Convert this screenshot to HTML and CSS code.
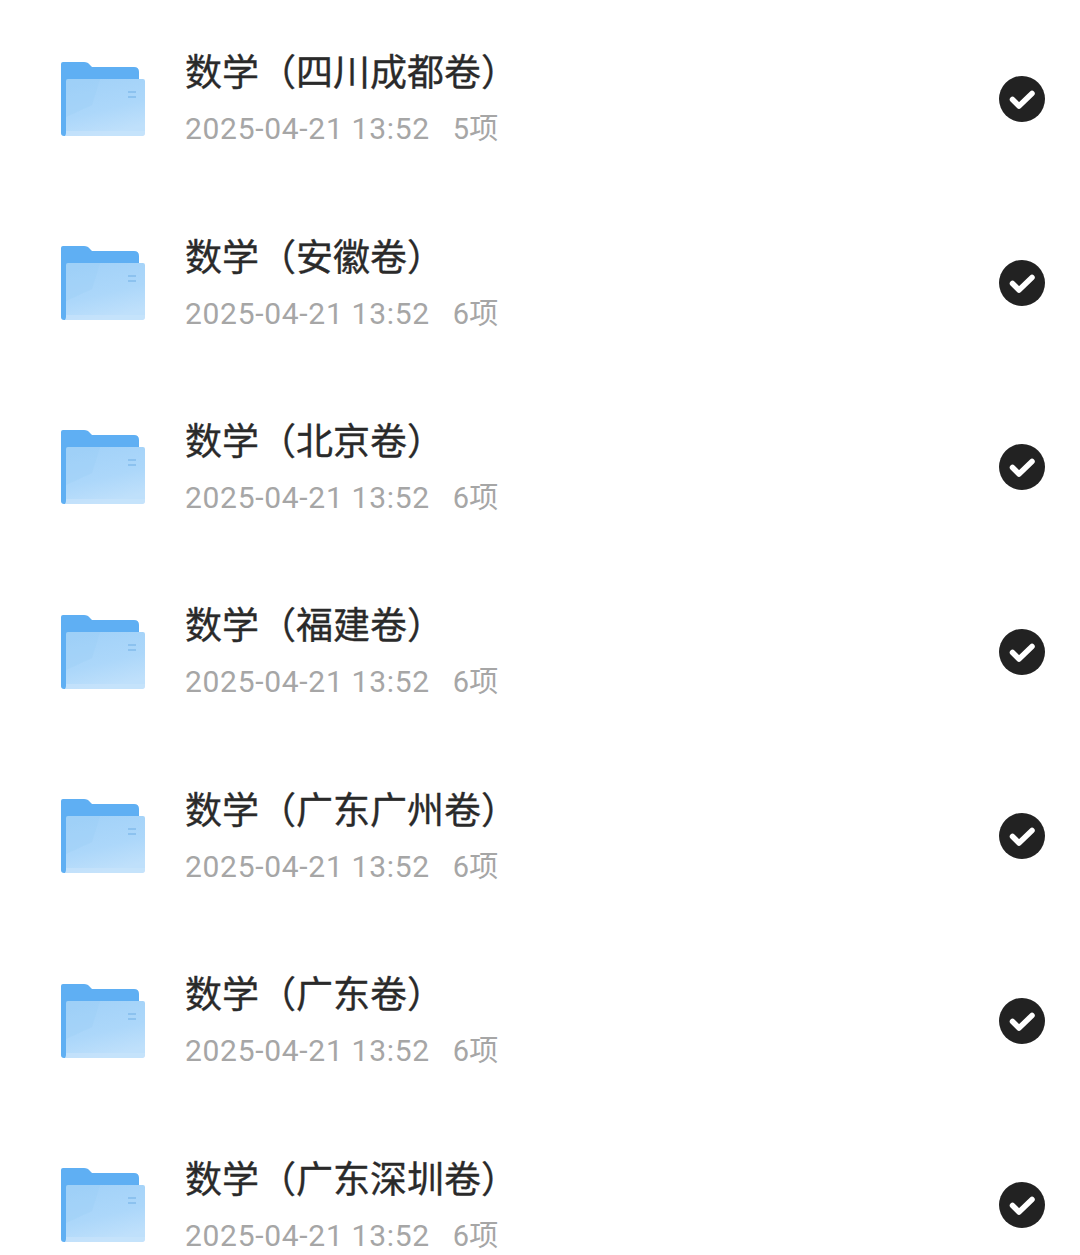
FILE: index.html
```html
<!DOCTYPE html>
<html lang="zh-CN">
<head>
<meta charset="utf-8">
<title>文件夹</title>
<link rel="stylesheet" href="styles.css">
</head>
<body>
<svg class="defs" width="0" height="0" aria-hidden="true">
  <defs>
    <linearGradient id="front" x1="0.1" y1="0" x2="0.45" y2="1">
      <stop offset="0" stop-color="#a1d1f8"/>
      <stop offset="0.6" stop-color="#acd7fa"/>
      <stop offset="1" stop-color="#bfe0fb"/>
    </linearGradient>
    <filter id="soft" x="-5%" y="-5%" width="110%" height="110%">
      <feGaussianBlur stdDeviation="0.5"/>
    </filter>
    <symbol id="folder" viewBox="0 0 86 76">
      <g filter="url(#soft)">
        <path d="M3 1H24Q28 1 30 4L32 6H74Q79 6 79 11V30H1V3Q1 1 3 1Z" fill="#5eaff3"/>
        <path d="M1 10H8V75H4Q1 75 1 72Z" fill="#5eaff3"/>
        <path d="M6 20Q6 18 8 18H83Q85 18 85 20V72Q85 75 82 75H5Q6 74 6 72Z" fill="url(#front)"/>
        <path d="M6 20Q6 18 8 18H40L32 44L6 56Z" fill="#98ccf6" opacity="0.3"/>
        <path d="M6 70H85V72Q85 75 82 75H5Q6 74 6 72Z" fill="#c9e5fc" opacity="0.6"/>
        <path d="M68 30H76V32H68ZM68 35H76V37H68Z" fill="#8cc2ef"/>
      </g>
    </symbol>
    <symbol id="check" viewBox="0 0 46 46">
      <circle cx="23" cy="23" r="23" fill="#222"/>
      <path d="M13.5 23.5L20 30L33 17.5" fill="none" stroke="#fff" stroke-width="5.5" stroke-linecap="round" stroke-linejoin="round"/>
    </symbol>
  </defs>
</svg>
<ul class="list">
  <li class="row">
    <svg class="folder"><use href="#folder"/></svg>
    <div class="text"><div class="title">数学（四川成都卷）</div><div class="meta"><span class="date">2025-04-21 13:52</span><span class="count">5项</span></div></div>
    <svg class="check"><use href="#check"/></svg>
  </li>
  <li class="row">
    <svg class="folder"><use href="#folder"/></svg>
    <div class="text"><div class="title">数学（安徽卷）</div><div class="meta"><span class="date">2025-04-21 13:52</span><span class="count">6项</span></div></div>
    <svg class="check"><use href="#check"/></svg>
  </li>
  <li class="row">
    <svg class="folder"><use href="#folder"/></svg>
    <div class="text"><div class="title">数学（北京卷）</div><div class="meta"><span class="date">2025-04-21 13:52</span><span class="count">6项</span></div></div>
    <svg class="check"><use href="#check"/></svg>
  </li>
  <li class="row">
    <svg class="folder"><use href="#folder"/></svg>
    <div class="text"><div class="title">数学（福建卷）</div><div class="meta"><span class="date">2025-04-21 13:52</span><span class="count">6项</span></div></div>
    <svg class="check"><use href="#check"/></svg>
  </li>
  <li class="row">
    <svg class="folder"><use href="#folder"/></svg>
    <div class="text"><div class="title">数学（广东广州卷）</div><div class="meta"><span class="date">2025-04-21 13:52</span><span class="count">6项</span></div></div>
    <svg class="check"><use href="#check"/></svg>
  </li>
  <li class="row">
    <svg class="folder"><use href="#folder"/></svg>
    <div class="text"><div class="title">数学（广东卷）</div><div class="meta"><span class="date">2025-04-21 13:52</span><span class="count">6项</span></div></div>
    <svg class="check"><use href="#check"/></svg>
  </li>
  <li class="row">
    <svg class="folder"><use href="#folder"/></svg>
    <div class="text"><div class="title">数学（广东深圳卷）</div><div class="meta"><span class="date">2025-04-21 13:52</span><span class="count">6项</span></div></div>
    <svg class="check"><use href="#check"/></svg>
  </li>
</ul>
</body>
</html>
```
FILE: styles.css
```css
html, body {
  margin: 0;
  padding: 0;
  height: 100%;
  overflow: hidden;
  background: #fff;
}
.defs {
  display: block;
  height: 0;
}
.list {
  list-style: none;
  margin: 0;
  padding: 6.5px 35px 0 60px;
}
.row {
  display: flex;
  align-items: center;
  height: 184.4px;
}
.folder {
  width: 86px;
  height: 76px;
  flex: none;
}
.text {
  flex: 1;
  margin-left: 39px;
  padding-top: 2px;
  font-family: Roboto, "Noto Sans CJK SC", sans-serif;
}
.title {
  font-size: 37px;
  line-height: 48px;
  font-weight: 400;
  -webkit-text-stroke: 0.35px #2a2a2a;
  color: #2a2a2a;
}
.meta {
  margin-top: 11px;
  font-size: 30px;
  line-height: 40px;
  letter-spacing: 0.7px;
  color: #a6a6a6;
}
.date {
  margin-right: 23px;
}
.count {
  font-size: 29px;
  letter-spacing: 0;
}
.check {
  width: 46px;
  height: 46px;
  flex: none;
}
```
